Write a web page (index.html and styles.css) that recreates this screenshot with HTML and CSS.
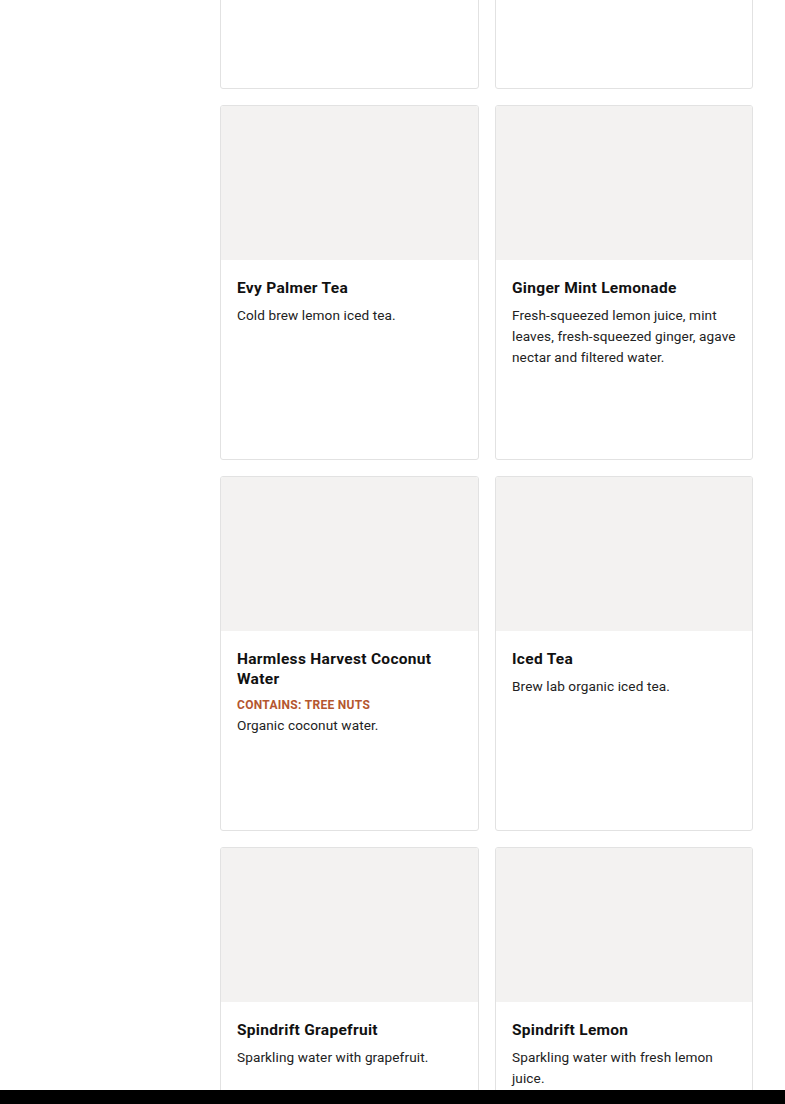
FILE: index.html
```html
<!DOCTYPE html>
<html lang="en">
<head>
  <meta charset="UTF-8">
  <title>Drinks</title>
  <link rel="stylesheet" href="styles.css">
</head>
<body>

  <div class="layout">
    <aside class="sidebar"></aside>

    <main class="menu">
      <div class="card">
        <div class="card-img"></div>
        <div class="card-body">
          <h3>Blood Orange Soda</h3>
          <p>Sparkling water with blood orange.</p>
        </div>
      </div>
      <div class="card">
        <div class="card-img"></div>
        <div class="card-body">
          <h3>Cold Brew</h3>
          <p>Slow steeped cold brew coffee.</p>
        </div>
      </div>

      <div class="card">
        <div class="card-img"></div>
        <div class="card-body">
          <h3>Evy Palmer Tea</h3>
          <p>Cold brew lemon iced tea.</p>
        </div>
      </div>
      <div class="card">
        <div class="card-img"></div>
        <div class="card-body">
          <h3>Ginger Mint Lemonade</h3>
          <p>Fresh-squeezed lemon juice, mint leaves, fresh-squeezed ginger, agave nectar and filtered water.</p>
        </div>
      </div>

      <div class="card">
        <div class="card-img"></div>
        <div class="card-body">
          <h3>Harmless Harvest Coconut Water</h3>
          <span class="allergen">Contains: Tree Nuts</span>
          <p>Organic coconut water.</p>
        </div>
      </div>
      <div class="card">
        <div class="card-img"></div>
        <div class="card-body">
          <h3>Iced Tea</h3>
          <p>Brew lab organic iced tea.</p>
        </div>
      </div>

      <div class="card">
        <div class="card-img"></div>
        <div class="card-body">
          <h3>Spindrift Grapefruit</h3>
          <p>Sparkling water with grapefruit.</p>
        </div>
      </div>
      <div class="card">
        <div class="card-img"></div>
        <div class="card-body">
          <h3>Spindrift Lemon</h3>
          <p>Sparkling water with fresh lemon juice.</p>
        </div>
      </div>
    </main>
  </div>

  <div class="cart-bar"></div>

</body>
</html>
```

FILE: styles.css
```css
* {
  box-sizing: border-box;
}

body {
  margin: 0;
  font-family: Roboto, 'Liberation Sans', sans-serif;
  background: #ffffff;
  color: #1a1a1a;
}

.layout {
  display: flex;
}

.sidebar {
  width: 220px;
  flex-shrink: 0;
}

.menu {
  width: 533px;
  margin-top: -266px;
  display: grid;
  grid-template-columns: 259px 258px;
  gap: 16px;
  padding-bottom: 40px;
}

.card {
  height: 355px;
  border: 1px solid #e2e2e2;
  border-radius: 3px;
  overflow: hidden;
  background: #ffffff;
}

.card-img {
  height: 154px;
  background: #f3f2f1;
}

.card-body {
  padding: 18px 16px 16px;
}

.card-body h3 {
  margin: 0 0 7px;
  font-size: 15.5px;
  line-height: 20px;
  font-weight: 700;
  letter-spacing: 0.3px;
  color: #111111;
}

.card-body p {
  margin: 0;
  font-size: 13.6px;
  line-height: 21px;
  letter-spacing: 0.1px;
  color: #222222;
}

.allergen {
  display: block;
  margin: 3px 0 1px;
  font-size: 12px;
  line-height: 18px;
  font-weight: 700;
  letter-spacing: 0.3px;
  text-transform: uppercase;
  color: #b4562f;
}

.cart-bar {
  position: fixed;
  left: 0;
  right: 0;
  bottom: 0;
  height: 14px;
  background: #000000;
}
```
